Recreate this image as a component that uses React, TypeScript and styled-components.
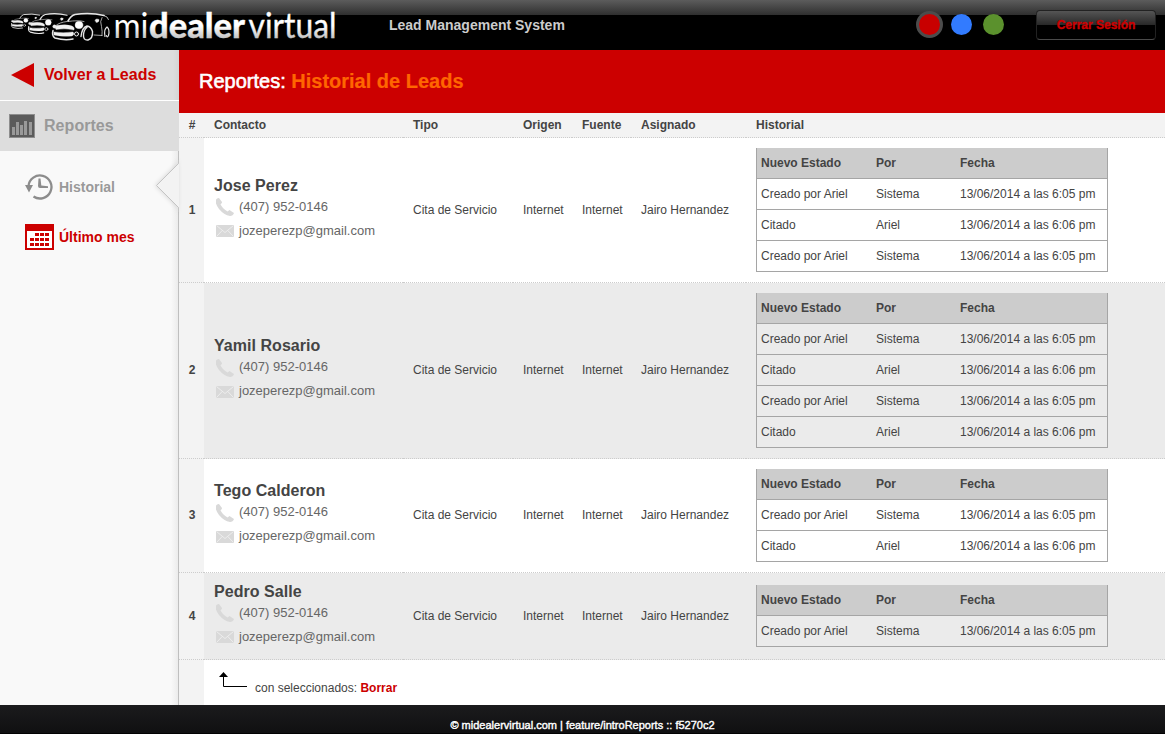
import React from 'react';
import styled, { createGlobalStyle } from 'styled-components';

const GlobalStyle = createGlobalStyle`
  * { box-sizing: border-box; }
  body {
    margin: 0;
    font: 12px/15px "Liberation Sans", Arial, Helvetica, sans-serif;
    color: #444;
    background: #fff;
  }
  h1, h2, p { margin: 0; }
  svg { display: block; }
  a { color: inherit; text-decoration: none; }
`;

const Page = styled.div`
  display: flex;
  flex-direction: column;
  width: 1165px;
  height: 734px;
  overflow: hidden;
`;

const Header = styled.header`
  display: flex;
  align-items: flex-start;
  height: 50px;
  flex: none;
  background: linear-gradient(#5c5c5c, #2f2f2f 15px, #000 15px);
`;

const LogoSvg = styled.svg`
  overflow: visible;
`;

const SystemName = styled.div`
  width: 527px;
  margin-left: 49px;
  padding-top: 16px;
  font-size: 14px;
  line-height: 18px;
  font-weight: bold;
  color: #ccc;
`;

const Swatches = styled.div`
  display: flex;
  align-items: center;
  gap: 11px;
  height: 48px;
`;

const Swatch = styled.button<{ $color: string; $active?: boolean }>`
  width: ${p => (p.$active ? 27 : 21)}px;
  height: ${p => (p.$active ? 27 : 21)}px;
  margin-right: ${p => (p.$active ? -3 : 0)}px;
  padding: 0;
  border-radius: 50%;
  border: ${p => (p.$active ? '3px solid #4c4c4c' : '0')};
  background: ${p => p.$color};
`;

const LogoutButton = styled.button`
  width: 120px;
  height: 30px;
  margin: 10px 0 0 32px;
  padding: 0;
  border: 1px solid #222;
  border-bottom-color: #4a4a4a;
  border-radius: 4px;
  background: linear-gradient(#555, #282828 14px, #000 14px);
  color: #c00;
  font: bold 12px/28px "Liberation Sans", Arial, sans-serif;
  -webkit-text-stroke: 0.35px #c00;
`;

const Body = styled.div`
  display: flex;
  height: 655px;
  flex: none;
`;

const Sidebar = styled.nav`
  position: relative;
  width: 179px;
  flex: none;
  background: linear-gradient(to right, #f9f9f9 171px, #ececec 178px, #bfbfbf 178px);
`;

const MainLink = styled.a<{ $muted?: boolean }>`
  display: flex;
  align-items: center;
  height: ${p => (p.$muted ? 50 : 51)}px;
  border-bottom: ${p => (p.$muted ? '0' : '1px solid #fff')};
  background: ${p => (p.$muted ? '#ddd' : 'linear-gradient(to right, #ddd 173px, #d5d5d5)')};
  color: ${p => (p.$muted ? '#999' : '#c00')};
  font-size: 16px;
  font-weight: bold;
`;

const MainIcon = styled.span`
  width: 44px;
  flex: none;
`;

const MainLabel = styled.span`
  padding-bottom: 2px;
  letter-spacing: 0.05px;
`;

const SubLink = styled.a<{ $muted?: boolean }>`
  display: flex;
  align-items: center;
  height: ${p => (p.$muted ? 72 : 28)}px;
  padding-left: 25px;
  color: ${p => (p.$muted ? '#999' : '#c00')};
  font-size: 14px;
  font-weight: bold;
`;

const SubIcon = styled.span`
  width: 34px;
  flex: none;
`;

const Notch = styled.svg`
  position: absolute;
  left: 154px;
  top: 110px;
  filter: drop-shadow(-1px 0 2px rgba(0, 0, 0, 0.12));
`;

const Main = styled.main`
  width: 986px;
`;

const Title = styled.h1`
  height: 63px;
  padding-left: 20px;
  background: #c00;
  color: #fff;
  font-size: 20px;
  line-height: 62px;
  font-weight: normal;
  -webkit-text-stroke: 0.6px #fff;
`;

const TitleAccent = styled.span`
  color: #f60;
  font-weight: bold;
  -webkit-text-stroke: 0.2px #f60;
`;

const LeadTable = styled.table`
  width: 986px;
  table-layout: fixed;
  border-spacing: 0;
`;

const HeadRow = styled.tr`
  height: 25px;
  background: #f3f3f3;
`;

const LeadRow = styled.tr<{ $h: number; $shaded: boolean }>`
  height: ${p => p.$h}px;
  background: ${p => (p.$shaded ? '#ebebeb' : '#fff')};
`;

const Cell = styled.td`
  padding: 0 10px;
  border-bottom: 1px dotted #ccc;
  text-align: left;
  vertical-align: middle;
  white-space: nowrap;
`;

const NumberCell = styled(Cell)`
  padding: 0 0 0 1px;
  background: #f3f3f3;
  text-align: center;
  font-weight: bold;
`;

const PersonName = styled.h2`
  font-size: 16px;
  line-height: 20px;
  letter-spacing: 0.04px;
`;

const ContactLine = styled.div`
  display: flex;
  align-items: center;
  height: 24px;
  color: #666;
  font-size: 13px;
`;

const ContactIcon = styled.span`
  width: 25px;
  padding: 1px 0 0 2px;
`;

const ContactText = styled.a`
  padding-bottom: 1px;
`;

const Contact = styled.div`
  height: 73px;
  padding-top: 2px;

  ${PersonName} { margin-bottom: -1px; }
`;

const HistoryTable = styled.table`
  width: 352px;
  table-layout: fixed;
  border-spacing: 0;
  border: 1px solid #a5a5a5;
  border-width: 0 1px;
`;

const HistoryHead = styled.th`
  height: 31px;
  padding: 0 4px;
  border-bottom: 1px solid #a5a5a5;
  background: #ccc;
  text-align: left;
`;

const HistoryCell = styled.td`
  height: 31px;
  padding: 0 4px;
  border-bottom: 1px solid #a5a5a5;
`;

const BulkActions = styled.div`
  display: flex;
  height: 45px;
  border-left: 25px solid #f3f3f3;
  padding: 12px 0 0 14px;
`;

const BulkText = styled.p`
  padding: 9px 0 0 8px;
`;

const DeleteLink = styled.a`
  color: #c00;
  font-weight: bold;
`;

const Footer = styled.footer`
  height: 29px;
  flex: none;
  padding-top: 12px;
  background: linear-gradient(#1b1b1d, #101011 28px, #020202 28px);
  color: #fff;
  font-size: 11px;
  line-height: 16px;
  text-align: center;
  -webkit-text-stroke: 0.4px #fff;
`;

const Car = ({ whole }: { whole?: boolean }) => (
  <g fill="none" stroke="#e6e6e6" strokeWidth="1.2" strokeLinecap="round">
    <path d="M16 8.500Q19 3 23 2Q38-.5 52 3" strokeWidth="1.6" />
    <path d="M15 9Q7 10 4 13M16 9Q26 7.500 32 9" strokeWidth=".7" />
    <path d="M5 13Q14 11.500 20 13.500Q23 15 22 17.500Q13 15.500 4 17Q2 14 5 13Z" fill="#f2f2f2" strokeWidth=".4" />
    <path d="M2 19.500Q11 21 21 19.500Q23 22 20 23.500Q10 24.500 2 22.500Z" fill="#f2f2f2" strokeWidth=".4" />
    <ellipse cx="27" cy="12.500" rx="4" ry="3.800" fill="#fff" strokeWidth=".3" />
    <circle cx="2.500" cy="14" r="1.800" fill="#eee" strokeWidth=".3" />
    <circle cx="24.500" cy="21.500" r="2" strokeWidth="1" />
    <path d="M1 18Q-.5 23.500 3 25.500Q13 28.500 21 26.500" strokeWidth="1.5" />
    {whole && (
      <>
        <path d="M29 24Q30 15 35 13.500Q39 14 40.500 19Q41 26 36 27.500Q31 28 31.500 22Q32 17 35 15" strokeWidth="1.4" />
        <path d="M42 22.500 50 23M50 5Q47.500 9 49.500 14Q50.500 19 50 23" strokeWidth=".7" />
        <path d="M52 3Q56 4 56.500 7" strokeWidth=".8" />
        <path d="M53 24Q51.500 17 55 14.500Q58 17 56.500 23Q55 26 54.500 23" strokeWidth="1.2" />
      </>
    )}
    <path d="M43 8Q43.500 5.500 47 7Q47.500 9.500 44.500 10Z" fill="#eee" strokeWidth=".4" />
  </g>
);

const Logo = () => (
  <LogoSvg width="340" height="50" viewBox="0 0 340 50">
    <defs>
      <linearGradient id="logoFill" gradientUnits="userSpaceOnUse" x1="0" y1="11" x2="0" y2="38">
        <stop offset=".55" stopColor="#fff" />
        <stop offset="1" stopColor="#c4c4c4" />
      </linearGradient>
    </defs>
    <g transform="translate(11 13.500) scale(.55)"><Car /></g>
    <g transform="translate(28 13) scale(.75)"><Car /></g>
    <g transform="translate(52 12.500)"><Car whole /></g>
    <g fill="url(#logoFill)" stroke="url(#logoFill)" fontFamily="Lato, sans-serif" fontSize="34.500">
      <text x="113.500" y="37.500" fontWeight="400" strokeWidth="0" textLength="35" lengthAdjust="spacingAndGlyphs">mi</text>
      <text x="149" y="37.500" fontWeight="900" strokeWidth=".3" textLength="96" lengthAdjust="spacingAndGlyphs">dealer</text>
      <text x="248.500" y="37.500" fontWeight="400" strokeWidth=".35" textLength="88" lengthAdjust="spacingAndGlyphs">virtual</text>
    </g>
  </LogoSvg>
);

const BackIcon = () => (
  <svg width="44" height="26"><path d="M11 13 34 1V25Z" fill="#c00" /></svg>
);

const ChartIcon = () => (
  <svg width="44" height="24">
    <rect x="9.5" y=".5" width="25" height="23" fill="#5b5b5b" stroke="#8d8d8d" />
    <path d="M12 13h3v8h-3zM16 8h3v13h-3zM20 11h3v10h-3zM24 7h3v14h-3zM29 8h3v13h-3z" fill="#999" />
  </svg>
);

const HistoryIcon = () => (
  <svg width="30" height="28" fill="none">
    <path d="M3.500 13A11.500 11.500 0 1 1 8.500 23.500" stroke="#8c8c8c" strokeWidth="2.3" />
    <path d="M0 12h8l-4 7.500z" fill="#8c8c8c" />
    <path d="M13.500 5.500h2l.8 7 6.700.7v1.800H15a2 2 0 0 1-2-2z" fill="#8c8c8c" />
  </svg>
);

const CalendarIcon = () => (
  <svg width="29" height="26">
    <path d="M0 0h29v26H0z" fill="#c00" />
    <path d="M2 7h25v17H2z" fill="#fff" />
    <path d="M10 9h4v3h-4zM15 9h4v3h-4zM20 9h4v3h-4zM5 14h4v3H5zM10 14h4v3h-4zM15 14h4v3h-4zM20 14h4v3h-4zM5 19h4v3H5zM10 19h4v3h-4zM15 19h4v3h-4zM20 19h4v3h-4z" fill="#c00" />
  </svg>
);

const PhoneIcon = () => (
  <svg width="18" height="18">
    <path d="M3 0 6 4Q6.300 5 4.500 6.300Q6 10 11.500 13.500L13.500 12 18 15Q17 18 14 18Q8 17 3 11Q-2 4 .5 1Q1.500 0 3 0Z" fill="#d9d9d9" />
  </svg>
);

const MailIcon = () => (
  <svg width="18" height="12" fill="none">
    <path d="M0 0h18v12H0z" fill="#d9d9d9" />
    <path d="M.5.5 9 7.500 17.500.5M.5 11.500 6.200 5.500M17.500 11.500 11.800 5.500" stroke="#f3f3f3" strokeWidth=".8" />
  </svg>
);

type Event = [state: string, by: string, date: string];

const created: Event = ['Creado por Ariel', 'Sistema', '13/06/2014 a las 6:05 pm'];
const cited: Event = ['Citado', 'Ariel', '13/06/2014 a las 6:06 pm'];

const leads: { name: string; height: number; events: Event[] }[] = [
  { name: 'Jose Perez', height: 145, events: [created, cited, created] },
  { name: 'Yamil Rosario', height: 176, events: [created, cited, created, cited] },
  { name: 'Tego Calderon', height: 114, events: [created, cited] },
  { name: 'Pedro Salle', height: 87, events: [created] },
];

const columns = ['Contacto', 'Tipo', 'Origen', 'Fuente', 'Asignado', 'Historial'];

const History = ({ events }: { events: Event[] }) => (
  <HistoryTable>
    <colgroup><col width="115" /><col width="84" /><col /></colgroup>
    <thead>
      <tr><HistoryHead>Nuevo Estado</HistoryHead><HistoryHead>Por</HistoryHead><HistoryHead>Fecha</HistoryHead></tr>
    </thead>
    <tbody>
      {events.map((event, i) => (
        <tr key={i}>{event.map(value => <HistoryCell key={value}>{value}</HistoryCell>)}</tr>
      ))}
    </tbody>
  </HistoryTable>
);

export default function App() {
  return (
    <Page>
      <GlobalStyle />
      <Header>
        <Logo />
        <SystemName>Lead Management System</SystemName>
        <Swatches>
          <Swatch $color="#c80000" $active aria-label="Rojo" />
          <Swatch $color="#327bff" aria-label="Azul" />
          <Swatch $color="#5b912d" aria-label="Verde" />
        </Swatches>
        <LogoutButton>Cerrar Sesión</LogoutButton>
      </Header>
      <Body>
        <Sidebar>
          <MainLink><MainIcon><BackIcon /></MainIcon><MainLabel>Volver a Leads</MainLabel></MainLink>
          <MainLink $muted><MainIcon><ChartIcon /></MainIcon><MainLabel>Reportes</MainLabel></MainLink>
          <SubLink $muted><SubIcon><HistoryIcon /></SubIcon>Historial</SubLink>
          <SubLink><SubIcon><CalendarIcon /></SubIcon>Último mes</SubLink>
          <Notch width="25" height="52">
            <path d="M25 3 2.500 25.500 25 48Z" fill="#f3f3f3" />
            <path d="M24.500 0V3.500L2.500 25.500 24.500 47.500V52" fill="none" stroke="#c4c4c4" />
          </Notch>
        </Sidebar>
        <Main>
          <Title>Reportes: <TitleAccent>Historial de Leads</TitleAccent></Title>
          <LeadTable>
            <colgroup>
              <col width="25" /><col width="199" /><col width="110" /><col width="59" />
              <col width="59" /><col width="115" /><col />
            </colgroup>
            <thead>
              <HeadRow>
                <NumberCell as="th">#</NumberCell>
                {columns.map(label => <Cell as="th" key={label}>{label}</Cell>)}
              </HeadRow>
            </thead>
            <tbody>
              {leads.map((lead, i) => (
                <LeadRow key={lead.name} $h={lead.height} $shaded={i % 2 === 1}>
                  <NumberCell>{i + 1}</NumberCell>
                  <Cell>
                    <Contact>
                      <PersonName>{lead.name}</PersonName>
                      <ContactLine>
                        <ContactIcon><PhoneIcon /></ContactIcon>
                        <ContactText>(407) 952-0146</ContactText>
                      </ContactLine>
                      <ContactLine>
                        <ContactIcon><MailIcon /></ContactIcon>
                        <ContactText>jozeperezp@gmail.com</ContactText>
                      </ContactLine>
                    </Contact>
                  </Cell>
                  <Cell>Cita de Servicio</Cell>
                  <Cell>Internet</Cell>
                  <Cell>Internet</Cell>
                  <Cell>Jairo Hernandez</Cell>
                  <Cell><History events={lead.events} /></Cell>
                </LeadRow>
              ))}
            </tbody>
          </LeadTable>
          <BulkActions>
            <svg width="29" height="16">
              <path d="M5.500 3V14.500H29" fill="none" stroke="#000" />
              <path d="M5.500 0 10 5H1Z" />
            </svg>
            <BulkText>con seleccionados: <DeleteLink>Borrar</DeleteLink></BulkText>
          </BulkActions>
        </Main>
      </Body>
      <Footer>© midealervirtual.com | feature/introReports :: f5270c2</Footer>
    </Page>
  );
}
